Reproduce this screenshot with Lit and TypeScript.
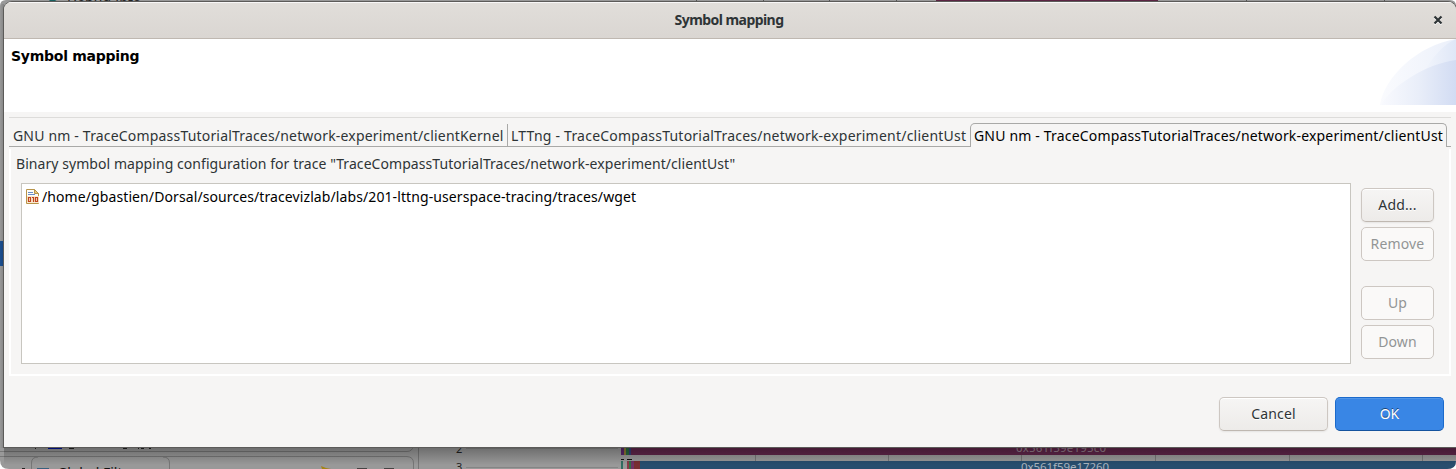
import { LitElement, html, svg, css } from "lit";
import { customElement, property } from "lit/decorators.js";

@customElement("push-button")
class PushButton extends LitElement {
  @property() label = "";
  @property({ type: Boolean, reflect: true }) disabled = false;
  @property({ type: Boolean, reflect: true }) primary = false;

  static styles = css`
    :host { display: block; width: 73px; height: 34px; }
    button {
      box-sizing: border-box; width: 100%; height: 100%; padding: 0; display: block;
      border: 1px solid #cdc7c2; border-bottom-color: #bfb8b1; border-radius: 5px;
      background: linear-gradient(#f6f5f4, #edebe9);
      box-shadow: inset 0 1px #fff, 0 1px 2px rgba(0, 0, 0, 0.07);
      font: 14px/32px "Noto Sans", sans-serif; color: #2e3436; text-shadow: 0 1px #fff;
      letter-spacing: 0.15px;
    }
    :host([disabled]) button { background: #faf9f8; border-color: #cdc7c2; box-shadow: none; color: #929595; text-shadow: none; }
    :host([primary]) button {
      background: #3986e5; border-color: #1b6acb; border-bottom-color: #15539e; color: #fff;
      box-shadow: inset 0 1px #5296e8; text-shadow: 0 -1px rgba(0, 0, 0, 0.5); letter-spacing: 0;
    }
  `;
  render() {
    return html`<button ?disabled=${this.disabled}>${this.label}</button>`;
  }
}

@customElement("desktop-backdrop")
class DesktopBackdrop extends LitElement {
  static styles = css`
    :host, svg { display: block; }
    text { font-family: "Noto Sans", sans-serif; }
  `;
  render() {
    const ticks = [755, 888, 1021, 1155, 1289, 1422];
    return html`<svg width="1456" height="469" viewBox="0 0 1456 469">
      <defs>
        <linearGradient id="shade" x1="0" y1="0" x2="0" y2="1">
          <stop offset="0" stop-opacity=".3"/><stop offset="1" stop-opacity="0"/>
        </linearGradient>
        <linearGradient id="side"><stop offset="0" stop-opacity="0"/><stop offset="1" stop-opacity=".15"/></linearGradient>
      </defs>
      <rect width="1456" height="469" fill="#fff"/>
      <path d="M0 6Q0 0 6 0H1450Q1456 0 1456 6V460Q1456 469 1447 469H9Q0 469 0 460Z" fill="#999"/>
      <rect y="241" width="4" height="25" fill="#1c4f91"/>
      <text x="67" y="8" font-size="14" fill="#222">Debug Info</text>
      <path d="M48 2l2-2h5l3 2" fill="#176060"/>
      <rect x="936" width="222" height="2" fill="#5a2442"/>
      <path d="M696.500 0v2M763.500 0v2M829.500 0v2M896.500 0v2M1246.500 0v2M1384.500 0v2" stroke="#555"/>
      <g fill="none" stroke="#777">
        <path d="M0 451.5H407Q412 451.5 413.5 446M0 456.5H407Q413.500 457 413.500 463V469M31.500 469V463Q31.500 457 38 457M163 457Q169.500 457 169.500 463V469M418.500 447V469"/>
      </g>
      <rect x="48" y="447" width="14" height="2" fill="#0012a0"/>
      <path d="M35 448.500h1M69 448.500h5M123 448.500h4M138 448.500h1M141 448.500h3M149 448.500h2" stroke="#222"/>
      <path d="M22 468.500h3" stroke="#222"/>
      <rect x="37" y="468" width="12" height="1" fill="#38617e"/>
      <text x="57" y="478" font-size="14" fill="#111">Global Filters</text>
      <path d="M321 466l5 2 5 1h-9z" fill="#a48415"/>
      <path d="M357 468.500h10M384 468.500h10" stroke="#444"/>
      <path d="M466 448.500H618M466 467.500H618" stroke="#858585"/>
      <text x="456" y="453" font-size="11" fill="#222">2</text>
      <text x="456" y="471" font-size="11" fill="#222">3</text>
      ${ticks.map((x) => svg`<path d="M${x}.500 455V461" stroke="#777"/>`)}
      <rect x="631" y="447" width="825" height="8" fill="#60264a"/>
      <path d="M640 461H1456Q1456 469 1447 469H640Z" fill="#284e6e"/>
      <g>
        <rect x="621" y="447" width="3" height="8" fill="#5a286c"/><rect x="624" y="447" width="2" height="8" fill="#8a7735"/>
        <rect x="626" y="447" width="3" height="8" fill="#27693e"/><rect x="629" y="447" width="2" height="8" fill="#353c77"/>
        <rect x="621" y="461" width="2" height="8" fill="#306e62"/><rect x="627" y="461" width="2" height="8" fill="#8a3a49"/>
        <rect x="629" y="461" width="2" height="8" fill="#317245"/><rect x="631" y="461" width="3" height="8" fill="#703364"/>
        <rect x="634" y="461" width="6" height="8" fill="#792f32"/>
        <path d="M621 459.500h3M627 459.500h5" stroke="#111"/>
      </g>
      <text x="1016" y="452" font-size="11.500" fill="#98838f" textLength="90">0x561f59e195c0</text>
      <text x="1021" y="471" font-size="11.500" fill="#a8b4be" textLength="88">0x561f59e17260</text>
      <rect x="4" y="447" width="1452" height="18" fill="url(#shade)"/>
      <rect y="4" width="4" height="444" fill="url(#side)"/>
    </svg>`;
  }
}

@customElement("app-root")
class AppRoot extends LitElement {
  static styles = css`
    :host { display: block; position: relative; width: 1456px; height: 469px; overflow: hidden; font: 14px/20px "Noto Sans", sans-serif; color: #2e3436; }
    * { box-sizing: border-box; }
    .dialog {
      position: absolute; left: 4px; top: 2px; width: 1452px; height: 445px; display: flex; flex-direction: column;
      background: #f6f5f4; border-radius: 8px 8px 0 0; overflow: hidden;
    }
    .frame { position: absolute; left: 3px; top: 1px; width: 1454px; height: 447px; border-radius: 9px 9px 0 0; background: #5c5b59; }
    .titlebar {
      height: 37px; flex: none; display: grid; grid-template-columns: 36px 1fr 36px; align-items: center;
      background: linear-gradient(#e1deda, #dad6d2); border-bottom: 1px solid #bfb8b1; box-shadow: inset 0 1px #f8f7f7;
    }
    .caption { grid-column: 2; text-align: center; font-weight: 700; padding-right: 2px; }
    .close { display: block; margin-left: 13px; }
    .header { height: 73px; flex: none; display: flex; justify-content: space-between; background: #fff; }
    .header h1 { margin: 7px 0 0 7px; font: bold 14px/20px "DejaVu Sans", sans-serif; letter-spacing: -0.26px; color: #000; white-space: nowrap; }
    .rule { height: 1px; flex: none; margin: 5px 5px 0; background: #dddcda; }
    .tabs { display: flex; height: 24px; flex: none; margin: 5px 5px 0; white-space: nowrap; }
    .tab { border-bottom: 1px solid #a9a9a7; line-height: 25px; height: 24px; padding-left: 4px; }
    .first { width: 498px; }
    .second { width: 463px; padding-left: 4px; position: relative; }
    .second::before { content: ""; position: absolute; left: 0; top: 1px; width: 1px; height: 22px; background: #a9a9a7; }
    .active { width: 477px; border: 1px solid #a9a9a7; border-bottom: 0; border-radius: 5px 5px 0 0; color: #000; padding-left: 3px; line-height: 24px; }
    .rest { flex: 1; border-bottom: 1px solid #a9a9a7; }
    .panel { margin: 2px 5px 0; height: 227px; border: 2px solid #fff; border-top: 0; padding-left: 5px; }
    .description { height: 34px; line-height: 29px; white-space: nowrap; }
    .body { display: flex; gap: 10px; padding-left: 5px; }
    .list { width: 1330px; height: 181px; background: #fff; border: 1px solid #c8c6c0; color: #000; }
    .item { display: flex; margin: 3px 0 0 3px; line-height: 19px; white-space: nowrap; }
    .item svg { flex: none; margin: 2px 1px 0 0; }
    .actions { display: grid; gap: 5px; align-content: start; padding-top: 5px; }
    .up { margin-top: 20px; }
    .footer { display: flex; justify-content: flex-end; gap: 7px; padding: 21px 12px 0; }
    .footer push-button { width: 109px; }
    .t-title { letter-spacing: -0.55px; }
    .t-a { letter-spacing: 0.182px; }
    .t-b { letter-spacing: 0.228px; }
    .t-c { letter-spacing: 0.175px; }
    .t-d { letter-spacing: 0.06px; }
    .t-e { letter-spacing: 0.096px; }
  `;
  render() {
    return html`
      <desktop-backdrop></desktop-backdrop>
      <div class="frame"></div>
      <div class="dialog">
        <div class="titlebar">
          <span class="caption"><span class="t-title">Symbol mapping</span></span>
          <svg class="close" width="10" height="10" viewBox="0 0 10 10"><path d="M1.500 2.500l7 7M8.500 2.500l-7 7" stroke="#fff" stroke-width="2"/><path d="M1.500 1.500l7 7M8.500 1.500l-7 7" stroke="#2e3436" stroke-width="2.200"/></svg>
        </div>
        <div class="header">
          <h1>Symbol mapping</h1>
          <svg width="76" height="73" viewBox="0 0 76 73">
            <defs>
              <linearGradient id="g1"><stop offset="0" stop-color="#fafbfe"/><stop offset=".6" stop-color="#f2f5fc"/><stop offset="1" stop-color="#eaeffa"/></linearGradient>
              <linearGradient id="g2"><stop offset="0" stop-color="#f9fafe"/><stop offset=".5" stop-color="#e9eef9"/><stop offset="1" stop-color="#d2dcf3"/></linearGradient>
              <linearGradient id="g3"><stop offset="0" stop-color="#f2f5fc"/><stop offset="1" stop-color="#dfe7f7"/></linearGradient>
            </defs>
            <path d="M0 66C4 38 38 6 76 0V66Z" fill="url(#g1)"/>
            <path d="M44 33C53 17 64 5 76 0V30Z" fill="url(#g3)"/>
            <path d="M1 66C10 49 44 25 76 21V66Z" fill="url(#g2)"/>
          </svg>
        </div>
        <div class="rule"></div>
        <div class="tabs">
          <div class="tab first"><span class="t-a">GNU nm - TraceCompassTutorialTraces/network-experiment/clientKernel</span></div>
          <div class="tab second"><span class="t-b">LTTng - TraceCompassTutorialTraces/network-experiment/clientUst</span></div>
          <div class="tab active"><span class="t-c">GNU nm - TraceCompassTutorialTraces/network-experiment/clientUst</span></div>
          <div class="rest"></div>
        </div>
        <div class="panel">
          <div class="description"><span class="t-d">Binary symbol mapping configuration for trace "TraceCompassTutorialTraces/network-experiment/clientUst"</span></div>
          <div class="body">
            <div class="list">
              <div class="item">
                <svg width="16" height="16" viewBox="0 0 16 16">
                  <path d="M1.500 14.500V.5h8l4 4v10z" fill="#fdfcf5" stroke="#b8954a"/><path d="M9.500.5v4h4z" fill="#e9c878" stroke="#b8954a"/>
                  <path d="M3 3.500h5M3 5.500h7" stroke="#6a8cc8"/>
                  <path d="M2 7h12v7H2z" fill="#fbe9d0"/>
                  <path d="M3.500 8.500h2v4h-2zM7 8.500h1.500v4.500M10.500 8.500h2v4h-2z" fill="none" stroke="#c0451c" stroke-width="1.200"/>
                </svg>
                <span class="t-e">/home/gbastien/Dorsal/sources/tracevizlab/labs/201-lttng-userspace-tracing/traces/wget</span>
              </div>
            </div>
            <div class="actions">
              <push-button label="Add..."></push-button>
              <push-button label="Remove" disabled></push-button>
              <push-button class="up" label="Up" disabled></push-button>
              <push-button label="Down" disabled></push-button>
            </div>
          </div>
        </div>
        <div class="footer">
          <push-button label="Cancel"></push-button>
          <push-button label="OK" primary></push-button>
        </div>
      </div>`;
  }
}
